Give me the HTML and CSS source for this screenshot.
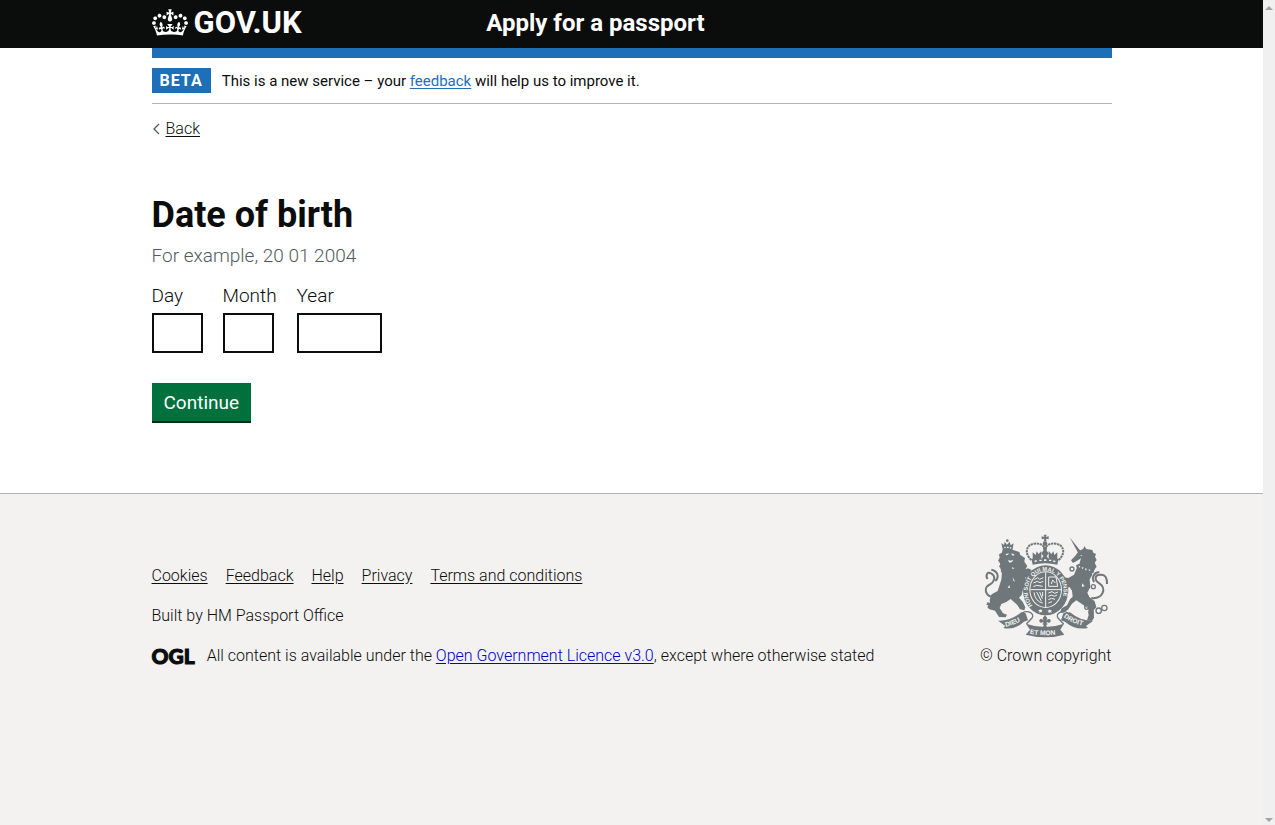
FILE: index.html
```html
<!DOCTYPE html>
<html lang="en">
<head>
	<meta charset="utf-8">
	<title>Date of birth - Apply for a passport</title>
	<meta name="viewport" content="width=device-width, initial-scale=1">
	<link rel="stylesheet" href="styles.css">
</head>
<body>
<div class="page">
	<header class="header">
		<div class="container header-row">
			<a class="logo" href="#">
				<svg class="crown" viewBox="0 0 132 97" aria-hidden="true"><path fill="currentColor" fill-rule="evenodd" d="M25 30.2c3.5 1.5 7.7-.2 9.1-3.7 1.5-3.6-.2-7.8-3.9-9.2-3.6-1.4-7.6.3-9.1 3.9-1.4 3.5.3 7.5 3.9 9zM9 39.5c3.6 1.5 7.8-.2 9.2-3.7 1.5-3.6-.2-7.8-3.9-9.1-3.6-1.5-7.6.2-9.1 3.8-1.4 3.5.3 7.5 3.8 9zM4.4 57.2c3.5 1.5 7.7-.2 9.1-3.8 1.5-3.6-.2-7.7-3.9-9.1-3.5-1.5-7.6.3-9.1 3.8-1.4 3.5.3 7.6 3.9 9.1zm38.3-21.4c3.5 1.5 7.7-.2 9.1-3.8 1.5-3.6-.2-7.7-3.9-9.1-3.6-1.5-7.6.3-9.1 3.8-1.3 3.6.4 7.7 3.9 9.1zm64.4-5.6c-3.6 1.5-7.8-.2-9.1-3.7-1.5-3.6.2-7.8 3.8-9.2 3.6-1.4 7.7.3 9.2 3.9 1.3 3.5-.4 7.5-3.9 9zm15.9 9.3c-3.6 1.5-7.7-.2-9.1-3.7-1.5-3.6.2-7.8 3.7-9.1 3.6-1.5 7.7.2 9.2 3.8 1.5 3.5-.3 7.5-3.8 9zm4.7 17.7c-3.6 1.5-7.8-.2-9.2-3.8-1.5-3.6.2-7.7 3.9-9.1 3.6-1.5 7.7.3 9.2 3.8 1.3 3.5-.4 7.6-3.9 9.1zM89.3 35.8c-3.6 1.5-7.8-.2-9.2-3.8-1.4-3.6.2-7.7 3.9-9.1 3.6-1.5 7.7.3 9.2 3.8 1.4 3.6-.3 7.7-3.9 9.1zM69.7 17.7l8.9 4.7V9.3l-8.9 2.8c-.2-.3-.5-.6-.9-.9L72.4 0H59.6l3.5 11.2c-.3.3-.6.5-.9.9l-8.8-2.8v13.1l8.8-4.7c.3.3.6.7.9.9l-5 15.4v.1c-.2.8-.4 1.6-.4 2.4 0 4.1 3.1 7.5 7 8.1h.2c.3 0 .7.1 1 .1.4 0 .7 0 1-.1h.2c4-.6 7.1-4.1 7.1-8.1 0-.8-.1-1.7-.4-2.4V34l-5.1-15.4c.4-.2.7-.6 1-.9zM66 92.8c16.9 0 32.8 1.1 47.1 3.2 4-16.9 8.9-26.7 14-33.5l-9.6-3.4c1 4.9 1.1 7.2 0 10.2-1.5-1.4-3-4.3-4.2-8.7L108.6 76c2.8-2 5-3.2 7.5-3.3-4.4 9.4-10 11.9-13.6 11.2-4.3-.8-6.3-4.6-5.6-7.9 1-4.7 5.7-5.9 8-.5 4.3-8.7-3-11.4-7.6-8.8 7.1-7.2 7.9-13.5 2.1-21.1-8 6.1-8.1 12.3-4.5 20.8-4.7-5.4-12.1-2.5-9.5 6.2 3.4-5.2 7.9-2 7.2 3.1-.6 4.3-6.4 7.8-13.5 7.2-10.3-.9-10.9-8-11.2-13.8 2.5-.5 7.1 1.8 11 7.3L80.2 60c-4.1 4.4-8 5.3-12.3 5.4 1.4-4.4 8-11.6 8-11.6H55.5s6.4 7.2 7.9 11.6c-4.2-.1-8-1-12.3-5.4l1.4 16.4c3.9-5.5 8.5-7.7 10.9-7.3-.3 5.8-.9 12.8-11.1 13.8-7.2.6-12.9-2.9-13.5-7.2-.7-5 3.8-8.3 7.1-3.1 2.7-8.7-4.6-11.6-9.4-6.2 3.7-8.5 3.6-14.7-4.6-20.8-5.8 7.6-5 13.9 2.2 21.1-4.7-2.6-11.9.1-7.7 8.8 2.3-5.5 7.1-4.2 8.1.5.7 3.3-1.3 7.1-5.7 7.9-3.5.7-9-1.8-13.5-11.2 2.5.1 4.7 1.3 7.5 3.3l-4.7-15.4c-1.2 4.4-2.7 7.2-4.3 8.7-1.1-3-.9-5.3 0-10.2l-9.5 3.4c5 6.9 9.9 16.7 14 33.5 14.8-2.1 30.8-3.2 47.7-3.2z"/></svg>
				<span>GOV.UK</span>
			</a>
			<a class="service-name" href="#">Apply for a passport</a>
		</div>
	</header>

	<div class="container main-wrap">
		<div class="phase-banner">
			<strong class="tag">BETA</strong>
			<span class="phase-text">This is a new service – your <a href="#">feedback</a> will help us to improve it.</span>
		</div>
		<a class="back-link" href="#">
			<svg class="chevron" viewBox="0 0 8 12" aria-hidden="true"><path d="M7 1L2 6l5 5" fill="none" stroke="#505a5f" stroke-width="1.3"/></svg>
			<span>Back</span>
		</a>
		<main>
			<form>
				<h1>Date of birth</h1>
				<p class="hint" id="dob-hint">For example, 20 01 2004</p>
				<div class="date-input">
					<div>
						<label for="dob-day">Day</label>
						<input type="text" id="dob-day" class="width-2" inputmode="numeric" aria-describedby="dob-hint">
					</div>
					<div>
						<label for="dob-month">Month</label>
						<input type="text" id="dob-month" class="width-2" inputmode="numeric">
					</div>
					<div>
						<label for="dob-year">Year</label>
						<input type="text" id="dob-year" class="width-4" inputmode="numeric">
					</div>
				</div>
				<button type="button" class="button">Continue</button>
			</form>
		</main>
	</div>

	<footer class="footer">
		<div class="container footer-row">
			<div class="footer-meta">
				<nav class="footer-links">
					<a href="#">Cookies</a>
					<a href="#">Feedback</a>
					<a href="#">Help</a>
					<a href="#">Privacy</a>
					<a href="#">Terms and conditions</a>
				</nav>
				<p>Built by HM Passport Office</p>
				<div class="licence">
					<span class="ogl">OGL</span>
					<span>All content is available under the <a href="#">Open Government Licence v3.0</a>, except where otherwise stated</span>
				</div>
			</div>
			<div class="copyright">
				<svg class="crest" viewBox="36 24 384 312" aria-hidden="true">
					<defs>
						<path id="garter" d="M188 238A54 61 0 1 1 266 238"/>
						<path id="ribbon-left" d="M107 302Q140 296 164 276"/>
						<path id="ribbon-mid" d="M179 323Q226 332 276 323"/>
						<path id="ribbon-right" d="M281 273Q308 294 350 302"/>
					</defs>
					<g fill="#6f777b">
						<!-- crown -->
						<path d="M221 26h9l-2 7 8-2v9l-8-2 2 8h-9l2-8-8 2v-9l8 2z"/>
						<circle cx="225" cy="53" r="7"/>
						<path d="M184 98h82l-4 18q-37-9-74 0z"/>
						<path d="M219 62h12l-1 12 6 8-6 9 6 8h-22l6-8-6-9 6-8zM188 79l9 8 3-11 6 8 8-9v27h-26zM262 79l-9 8-3-11-6 8-8-9v27h26z"/>
						<path fill="none" stroke="#6f777b" stroke-width="6" stroke-dasharray="7 2" d="M184 102C162 82 168 56 193 53c18-2 30 6 31 16M266 102C288 82 282 56 257 53c-18-2-30 6-31 16"/>
						<path fill="#f3f2f1" d="M193 104l6-2 2 4-6 3zM208 101h7v4h-7zM222 100h7v5h-7zM237 101h7v4h-7zM251 103l6 2-2 4-6-2z"/>
						<!-- lion -->
						<path d="M94 51l8 6 2-10 7 9 8-9 3 11 9-6-4 22q-15-6-28 0z"/>
						<circle cx="112" cy="44" r="4"/>
						<path fill="#f3f2f1" d="M102 64l5-2v4l-4 1zM111 62h5v4h-5zM120 63l4 1-1 4-4-1z"/>
						<path d="M98 71q18-5 34 2l16 5 3 9 14 9-2 11 9 13-5 8 5 14-9 8 7 14-3 20-8 6-4 17-8 8 11 12 8 17-3 9-13-3-8-13-20-18-13 9-15 6-5 12 10 16 12 4-4 8-20-1-12-19-17-4-6-6 3-6-6-2 3-7 8 1-1-9 6-16 18-10 11-34 2-23-5-10 3-12-6-6 7-9-3-9z"/>
						<path d="M96 80l-9 5 2 10-5 9 8 8-5 10 8 6-3 11 12 2zM152 136l22-9 11 5-3 5 7 4-7 5 5 7-10 4-22-5z"/>
						<path fill="#f3f2f1" d="M107 84l10-2-3 4-6 2zM125 82l9 4-4 3-5-2zM114 101l8 3 8-3-4 7-8 2zM128 153l7 14-5-3zM113 185l5-8 2 9zM126 123l7 4-5 3z"/>
						<path fill="none" stroke="#6f777b" stroke-width="6" d="M75 212C45 215 40 185 57 177c17-8 22-27 6-35M63 142c-12-8-17 9-10 17M76 165c13-13 7-30-12-34"/>
						<!-- unicorn -->
						<path d="M299 34l32 40-7 6z"/>
						<path d="M326 76l14-8 3-8 6 9 18 3 3 8 8 4-3 8 5 10-6 8 6 12-8 10-8-5-31-2-4-15 4-13-8 5-16 9-6-8 13-14z"/>
						<path d="M324 118l38 12 5 17-8 13 2 23-9 17 6 13 16 13 5 17-8 10 1 23-7 9-14-2 5-16-1-18-15-12-21-14-13 10-12 18-16 10-8-2 5-12 16-9 9-18 8-8-2-18-7-10-22 5-4-8 16-7-8-8-15 1-4-8 12-7 21 4 17-10z"/>
						<path d="M318 118l13-6 37 14 8-2-6 18-20-1-29-13z"/>
						<path fill="#f3f2f1" d="M330 89l7-2-3 4zM326 119l5 2-3 5zM335 123l6 2-4 5zM345 127l6 2-4 5zM356 130l6 2-5 4zM336 172l8 8-8 3zM346 236l10 9-4-1z"/>
						<path fill="none" stroke="#6f777b" stroke-width="6" d="M364 216c36 4 46-30 25-43-19-12-15-29 6-26M394 146c11-1 18 11 17 28M388 139c-15-2-25 17-15 29"/>
						<g fill="none" stroke="#6f777b" stroke-width="4">
							<circle cx="350" cy="244" r="6"/><circle cx="363" cy="259" r="6"/>
							<circle cx="386" cy="254" r="8"/><circle cx="403" cy="246" r="8"/>
							<circle cx="370" cy="182" r="6"/><circle cx="306" cy="129" r="6"/>
							<circle cx="303" cy="169" r="6"/>
						</g>
						<!-- garter and shield -->
						<ellipse cx="227" cy="193" rx="68" ry="75"/>
						<ellipse cx="227" cy="191" rx="49" ry="55" fill="#f3f2f1"/>
						<ellipse cx="227" cy="191" rx="46" ry="52"/>
						<path fill="none" stroke="#f3f2f1" stroke-width="3" d="M227 139v104M181 191h92"/>
						<path fill="none" stroke="#f3f2f1" stroke-width="3" d="M193 161l10-6 6 5 11-5M190 171l12-5 8 4 10-4M190 182l10-4 18 3M236 153h22l5 28h-27zM244 174l4-12 8 9M192 199q4 28 26 32M200 198l14 27M209 198l8 20M218 198v13M235 201l11-4 8 5 10-4M235 211l11-4 6 4 9-4M235 221l10-4 10 3M235 231l11-4"/>
						<path fill="#f3f2f1" d="M210 249l3 3 5-1-3 4 2 4-5-1-4 3v-5l-4-3 5-1zM238 250l3 3 5-1-3 4 2 4-5-1-4 3v-5l-4-3 5-1z"/>
						<!-- ribbon and fleur -->
						<path d="M84 284q36 2 70-25l13 3 7 21-12 4q-30 27-62 19l6-6z"/>
						<path d="M370 284q-38 2-70-25l-20 3-7 21 12 4q31 27 69 19l-6-6z"/>
						<path fill="none" stroke="#6f777b" stroke-width="4" d="M156 261c19-10 39 2 30 15l-17 18M294 261c-19-10-39 2-30 15l17 18"/>
						<path d="M168 293q58 20 114 0l-11 18 12 15q-56 16-116 0l13-15z"/>
						<path d="M225 267l7 10-4 9q5-10 12-6 6 6-3 11l-5-3-4 4h4v4h-4l4 9-7 5-7-5 4-9h-4v-4h4l-4-4-5 3q-9-5-3-11 7-4 12 6l-4-9z"/>
					</g>
					<g class="motto" fill="#f3f2f1">
						<text class="motto-ring"><textPath href="#garter">HONI SOIT QUI MAL Y PENSE</textPath></text>
						<text><textPath href="#ribbon-left">DIEU</textPath></text>
						<text><textPath href="#ribbon-mid">ET MON</textPath></text>
						<text><textPath href="#ribbon-right">DROIT</textPath></text>
					</g>
				</svg>
				<span>© Crown copyright</span>
			</div>
		</div>
	</footer>
</div>

<div class="scroll-track" aria-hidden="true">
	<svg viewBox="0 0 8 5"><path d="M0 5l4-4 4 4z" fill="#a3a3a3"/></svg>
	<svg viewBox="0 0 8 5"><path d="M0 0l4 4 4-4z" fill="#a3a3a3"/></svg>
</div>
</body>
</html>
```

FILE: styles.css
```css
* {
	box-sizing: border-box;
}

body {
	margin: 0;
	display: grid;
	grid-template-columns: minmax(0, 1fr) 12px;
	min-height: 100vh;
	font-family: Roboto, "Liberation Sans", sans-serif;
	font-size: 16px;
	font-weight: 300;
	line-height: 20px;
	color: #0b0c0c;
	background: #fff;
}

a {
	color: inherit;
	text-underline-offset: 2px;
}

p {
	margin: 0;
}

.page {
	display: flex;
	flex-direction: column;
}

.container {
	width: 100%;
	max-width: 960px;
	margin: 0 auto;
}

/* header */
.header {
	background: #0b0c0c;
	color: #fff;
}

.header-row {
	display: grid;
	grid-template-columns: 1fr 2fr;
	gap: 22px;
	align-items: center;
	padding-bottom: 2px;
}

.logo,
.service-name {
	font-weight: bold;
	line-height: 46px;
	text-decoration: none;
}

.logo {
	display: flex;
	align-items: center;
	gap: 6px;
	font-size: 31px;
}

.crown {
	width: 36px;
	height: 27px;
	margin-bottom: 2px;
}

.service-name {
	font-size: 24px;
}

/* main */
.main-wrap {
	border-top: 10px solid #1d70b8;
	padding-bottom: 70px;
}

.phase-banner {
	display: flex;
	align-items: center;
	gap: 11px;
	padding: 10px 0;
	border-bottom: 1px solid #b1b4b6;
}

.phase-text {
	font-size: 15px;
	font-weight: 400;
}

.phase-banner a {
	color: #1d70b8;
}

.tag {
	padding: 0 8px;
	font-weight: bold;
	line-height: 25px;
	letter-spacing: 1px;
	color: #fff;
	background: #1d70b8;
}

.back-link {
	display: inline-flex;
	align-items: center;
	gap: 6px;
	margin-top: 15px;
	text-decoration: none;
}

.back-link span {
	text-decoration: underline;
}

.chevron {
	width: 8px;
	height: 12px;
}

h1 {
	margin: 55px 0 8px;
	font-size: 36px;
	line-height: 40px;
}

.hint {
	font-size: 19px;
	line-height: 25px;
	color: #505a5f;
}

.date-input {
	display: flex;
	gap: 20px;
	margin: 15px 0 30px;
	font-size: 19px;
	line-height: 25px;
}

.date-input label {
	display: block;
	margin-bottom: 5px;
}

.date-input input {
	display: block;
	height: 40px;
	padding: 5px;
	border: 2px solid #0b0c0c;
	border-radius: 0;
	font: inherit;
}

.width-2 {
	width: 51px;
}

.width-4 {
	width: 85px;
}

.button {
	display: block;
	height: 40px;
	padding: 0 12px;
	border: 0;
	font: inherit;
	font-size: 19px;
	font-weight: 400;
	color: #fff;
	background: #00703c;
	box-shadow: inset 0 -2px 0 #002d18;
}

/* footer */
.footer {
	flex: 1;
	padding: 40px 0;
	border-top: 1px solid #b1b4b6;
	background: #f3f2f1;
}

.footer-row {
	display: flex;
	justify-content: space-between;
	align-items: flex-end;
}

.footer-meta {
	display: flex;
	flex-direction: column;
	gap: 20px;
}

.footer-links {
	display: flex;
	gap: 18px;
}

.licence {
	display: flex;
	align-items: center;
	gap: 12px;
}

.licence a {
	color: #00c;
}

.ogl {
	font-family: Lato, sans-serif;
	font-size: 21px;
	font-weight: 900;
	-webkit-text-stroke: 1px #0b0c0c;
}

.copyright {
	display: flex;
	flex-direction: column;
	align-items: center;
	gap: 8px;
}

.crest {
	width: 128px;
	height: 104px;
}

.motto {
	font-family: "Liberation Sans", sans-serif;
	font-size: 20px;
	font-weight: bold;
}

.motto-ring {
	font-size: 17px;
}

/* window scrollbar */
.scroll-track {
	display: flex;
	flex-direction: column;
	justify-content: space-between;
	align-items: center;
	padding: 5px 0 2px;
	background: #f0f0f0;
}

.scroll-track svg {
	width: 8px;
	height: 5px;
}
```
